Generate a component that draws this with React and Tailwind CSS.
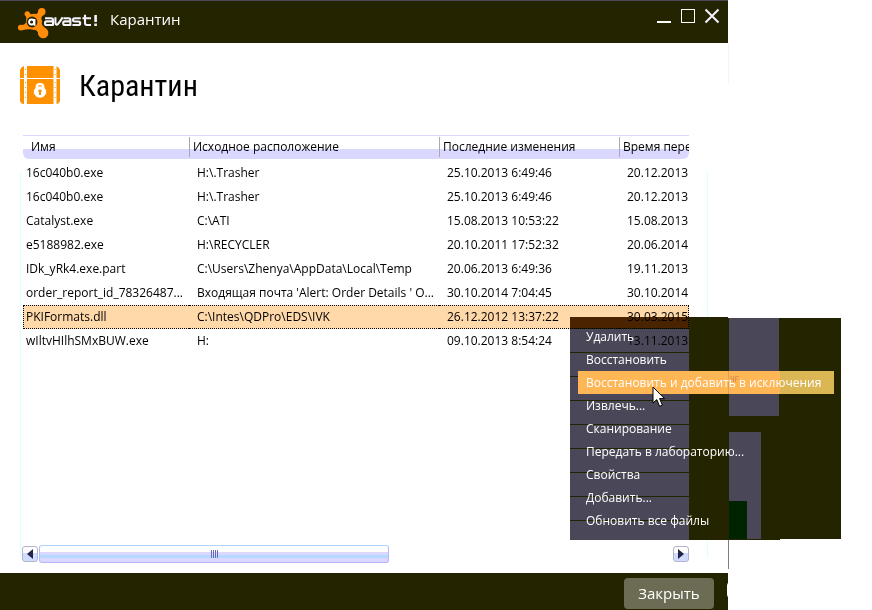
const FILES = [
  ["16c040b0.exe", "H:\\.Trasher", "25.10.2013 6:49:46", "20.12.2013"],
  ["16c040b0.exe", "H:\\.Trasher", "25.10.2013 6:49:46", "20.12.2013"],
  ["Catalyst.exe", "C:\\ATI", "15.08.2013 10:53:22", "15.08.2013"],
  ["e5188982.exe", "H:\\RECYCLER", "20.10.2011 17:52:32", "20.06.2014"],
  ["IDk_yRk4.exe.part", "C:\\Users\\Zhenya\\AppData\\Local\\Temp", "20.06.2013 6:49:36", "19.11.2013"],
  ["order_report_id_78326487...", "Входящая почта 'Alert: Order Details ' O...", "30.10.2014 7:04:45", "30.10.2014"],
  ["PKIFormats.dll", "C:\\Intes\\QDPro\\EDS\\IVK", "26.12.2012 13:37:22", "30.03.2015"],
  ["wIltvHIlhSMxBUW.exe", "H:", "09.10.2013 8:54:24", "13.11.2013"],
];
const SELECTED = 6;

const ACTIONS = [
  "Удалить",
  "Восстановить",
  "Восстановить и добавить в исключения",
  "Извлечь...",
  "Сканирование",
  "Передать в лабораторию...",
  "Свойства",
  "Добавить...",
  "Обновить все файлы",
];
const HOVERED = 2;

function AvastLogo() {
  return (
    <svg className="h-8 w-20 shrink-0" viewBox="0 0 80 32" role="img" aria-label="avast!">
      <g fill="#ff8c0a">
        <circle cx="16" cy="14.8" r="8" />
        <circle cx="23.8" cy="4.8" r="3.7" />
        <circle cx="9.2" cy="6.8" r="2.6" />
        <circle cx="2.8" cy="20.6" r="2.9" />
        <circle cx="25.2" cy="26" r="5.2" />
        <path d="M11.5 5.8Q12.5 8.2 15.5 7.8Q20 7.5 20.4 3.8L27 6.8Q23 9 23 13Q23 19 28.6 22L20.3 28Q20.5 22.5 14 22.3Q8 22 4.2 23.2L2 17.8Q7.5 18.5 8.4 14Q9 11 7.4 8.6Z" />
      </g>
      <circle cx="14" cy="15" r="5.4" fill="#242400" />
      <circle cx="13.6" cy="15" r="2.5" fill="none" stroke="#fff" strokeWidth="1.9" />
      <path d="M16.6 12V18.8" stroke="#fff" strokeWidth="1.7" />
      <g fill="none" stroke="#f4f2ff" strokeWidth="2.1" strokeLinejoin="round">
        <path d="M27 11.2H33Q35 11.2 35 13V18H28.6Q27 18 27 16.2Q27 14.4 28.6 14.4H34.5" />
        <path d="M37.4 10.2V15.6Q37.6 18 39.4 17.6Q40.4 17 44.6 10.4" />
        <path d="M45.4 11.2H50.6Q52.4 11.2 52.4 13V18H46.8Q45.2 18 45.2 16.2Q45.2 14.4 46.8 14.4H52" />
        <path d="M62.8 11.2H56.6Q55 11.2 55 12.8Q55 14.5 56.6 14.5H60.4Q62.2 14.5 62.2 16.2Q62.2 18 60.4 18H54.4" />
        <path d="M67 7.8V16Q67 18 69 18H73M64.4 11.2H73" />
        <path d="M77.6 8V15M77.6 16.6V19.1" strokeWidth="2.6" />
      </g>
    </svg>
  );
}

function ChestIcon() {
  return (
    <svg className="h-[38px] w-10 shrink-0" viewBox="0 0 40 38" aria-hidden="true">
      <path d="M4 0H36Q39 1 40 4V12H0V4Q1 1 4 0ZM0 13H40V35Q39 38 37 38H3Q1 38 0 35Z" fill="#ff9000" />
      <path d="M4 0H7V38H4ZM33.5 0H36.5V38H33.5Z" fill="#fff" />
      <g fill="#ff9000">
        <path d="M5 3h1v1h-1zM5 8h1v1h-1zM5 16h1v1h-1zM5 21h1v1h-1zM5 26h1v1h-1zM5 31h1v1h-1z" />
        <path d="M34.5 3h1v1h-1zM34.5 8h1v1h-1zM34.5 16h1v1h-1zM34.5 21h1v1h-1zM34.5 26h1v1h-1zM34.5 31h1v1h-1z" />
      </g>
      <ellipse cx="20" cy="26" rx="6.2" ry="5.8" fill="#fff" />
      <path d="M16.8 24V20.6Q16.8 18.1 20 18.1Q23.2 18.1 23.2 20.6V24" fill="none" stroke="#fff" strokeWidth="2.3" />
      <path d="M20 23.4A1.7 1.7 0 0 1 21 26.5V29H19V26.5A1.7 1.7 0 0 1 20 23.4Z" fill="#ff9000" />
    </svg>
  );
}

function TitleBar() {
  return (
    <header className="flex h-[43px] items-start border-t border-[#4a4858] bg-[#242400] pl-[18px] pr-2 text-white">
      <div className="flex flex-1 items-start gap-3 pt-[6px]">
        <AvastLogo />
        <span className="text-[15px] leading-6">Карантин</span>
      </div>
      <div className="flex items-center gap-2 pt-[7px]">
        <button type="button" aria-label="Свернуть" className="flex h-4 w-4 items-end justify-center pb-px">
          <span className="h-0.5 w-[14px] bg-white" />
        </button>
        <button type="button" aria-label="Развернуть" className="flex h-4 w-4 items-center justify-center">
          <span className="h-[14px] w-[14px] border border-white" />
        </button>
        <button type="button" aria-label="Закрыть окно" className="h-4 w-4">
          <svg viewBox="0 0 16 16" className="h-4 w-4">
            <path d="M1.5 1.5L14.5 14.5M14.5 1.5L1.5 14.5" stroke="#f4f2ff" strokeWidth="2" />
          </svg>
        </button>
      </div>
    </header>
  );
}

function FileTable() {
  return (
    <table className="w-full table-fixed border-separate border-spacing-0 text-left text-xs text-black">
      <colgroup>
        <col className="w-[166px]" />
        <col className="w-[250px]" />
        <col className="w-[180px]" />
        <col />
      </colgroup>
      <thead>
        <tr className="h-6 [&>th]:overflow-hidden [&>th]:whitespace-nowrap [&>th]:border-t [&>th]:border-[#dad8ff] [&>th]:bg-linear-to-b [&>th]:from-white [&>th]:from-58% [&>th]:to-[#dad8ff] [&>th]:to-58% [&>th]:p-0 [&>th]:pb-0.5 [&>th]:font-normal">
          <th scope="col" className="rounded-bl-md">
            <span className="block pl-2 leading-5">Имя</span>
          </th>
          <th scope="col">
            <span className="block border-l border-[#a9a9b0] pl-[3px] leading-5">Исходное расположение</span>
          </th>
          <th scope="col">
            <span className="block border-l border-[#a9a9b0] pl-[3px] leading-5">Последние изменения</span>
          </th>
          <th scope="col" className="rounded-br-md">
            <span className="block border-l border-[#a9a9b0] pl-[3px] leading-5">Время переноса</span>
          </th>
        </tr>
      </thead>
      <tbody className="before:block before:h-0.5">
        {FILES.map((file, i) => (
          <tr
            key={i}
            aria-selected={i === SELECTED}
            className={
              i === SELECTED
                ? "h-6 bg-[#ffd9aa] [&>td]:border-y [&>td]:border-dotted [&>td]:border-black [&>td:first-child]:border-l [&>td:first-child]:pl-0.5 [&>td:last-child]:border-r"
                : "h-6"
            }
          >
            {file.map((text, c) => (
              <td key={c} className={c === 0 ? "overflow-hidden whitespace-nowrap p-0 pl-[3px]" : "overflow-hidden whitespace-nowrap p-0 pl-2"}>
                {text}
              </td>
            ))}
          </tr>
        ))}
      </tbody>
    </table>
  );
}

function ScrollButton({ label, path }) {
  return (
    <button
      type="button"
      aria-label={label}
      className="flex h-4 w-4 items-center justify-center rounded-[3px] border border-[#b4b4c8] bg-linear-to-b from-white from-45% to-[#cfdcff] to-45%"
    >
      <svg viewBox="0 0 10 10" className="h-[10px] w-[10px]">
        <path d={path} fill="#242448" />
      </svg>
    </button>
  );
}

function HorizontalScroll() {
  return (
    <div className="flex h-[18px] items-center" role="scrollbar" aria-orientation="horizontal" aria-valuenow={0} aria-controls="files">
      <ScrollButton label="Влево" path="M8 0V10L2 5Z" />
      <div className="flex-1 px-px">
        <div className="flex h-[18px] w-[350px] flex-col justify-center rounded-[3px] border border-[#b6b6ff] border-t-[#b0d4ff] bg-[linear-gradient(to_bottom,#fff_38%,#dad8ff_38%,#dad8ff_56%,#b4daff_56%,#b4daff_74%,#dad8ff_74%)]">
          <div className="flex justify-center gap-px">
            <span className="h-2 w-px bg-[#6c6cb4]" />
            <span className="h-2 w-px bg-[#6c6cb4]" />
            <span className="h-2 w-px bg-[#6c6cb4]" />
            <span className="h-2 w-px bg-[#6c6cb4]" />
          </div>
        </div>
      </div>
      <ScrollButton label="Вправо" path="M2 0V10L8 5Z" />
    </div>
  );
}

function ContextMenu() {
  return (
    <div className="absolute left-[570px] top-[317px] h-[223px] w-[271px]">
      {/* translucent backdrop: the rows show through it */}
      <div className="absolute left-0 top-0 h-[11px] w-[119px] bg-[#4a2a00] mix-blend-multiply" />
      <div className="absolute bottom-0 left-0 top-[11px] w-[119px] bg-[repeating-linear-gradient(to_bottom,#242400_0px,#242400_1px,#4a4858_1px,#4a4858_24px)] mix-blend-multiply" />
      <div className="absolute inset-y-0 left-[119px] w-[39px] bg-[#242400]" />
      <div className="absolute bottom-px left-[158px] right-0 top-px bg-[#242400]" />
      <div className="absolute bottom-0 left-[158px] h-px w-[52px] bg-[#242400]" />
      <div className="absolute left-[159px] top-px h-[98px] w-[50px] bg-[#4a4858]" />
      <div className="absolute bottom-px left-[159px] h-[107px] w-8 bg-[#4a4858]" />
      <div className="absolute bottom-px left-[159px] h-[38px] w-[18px] bg-[#002400]" />
      <ul role="menu" className="relative py-2 pl-2 pr-[7px] text-xs text-white">
        {ACTIONS.map((label, i) => (
          <li key={label} role="none">
            <button
              type="button"
              role="menuitem"
              className={
                i === HOVERED
                  ? "relative block h-[23px] w-full whitespace-nowrap bg-linear-to-r from-[#ffb655] from-79% to-[#dab655] to-79% px-2 text-left"
                  : "block h-[23px] w-full whitespace-nowrap px-2 text-left"
              }
            >
              {i === HOVERED && (
                <svg className="absolute left-[150px] top-0 h-[23px] w-3" viewBox="0 0 12 23" fill="none" stroke="#da9155" aria-hidden="true">
                  <path d="M.5 0V23" opacity=".7" />
                  <path d="M3 5V8H5.5M5.5 5V11M11 5.5H7.5V11M7.5 8H10.5" />
                </svg>
              )}
              <span className="relative">{label}</span>
            </button>
          </li>
        ))}
      </ul>
      <svg className="absolute left-[82px] top-[69px] h-[22px] w-[14px]" viewBox="0 0 14 22" aria-hidden="true">
        <path d="M1 1V17L4.8 13.6L7.6 20.3L10.4 19.2L7.6 12.6H12.5Z" fill="#fff" stroke="#000" strokeWidth="1" />
      </svg>
    </div>
  );
}

export default function App() {
  return (
    <div className="relative min-h-screen bg-white font-['Open_Sans','Noto_Sans',sans-serif]">
      <div className="mr-36 flex min-h-screen flex-col">
        <TitleBar />
        <main className="relative flex flex-1 flex-col px-5 pb-[10px]">
          <div className="absolute left-full top-0 h-[41px] w-px bg-[#f4f4f6]" />
          <div className="absolute bottom-1 left-full h-[30px] w-px bg-[#7f7d8b]" />
          <div className="flex h-[91px] items-center gap-[19px] pb-[7px]">
            <ChestIcon />
            <h1 className="pt-0.5 font-['Roboto_Condensed','Roboto',sans-serif] text-[30px] leading-8 text-black">Карантин</h1>
          </div>
          <div className="relative flex flex-1 flex-col justify-between pl-0.5 pr-[19px] pt-px before:absolute before:bottom-1.5 before:left-0 before:right-0 before:top-[38px] before:border-x before:border-[#daffff]">
            <div id="files" className="pl-px">
              <FileTable />
            </div>
            <HorizontalScroll />
          </div>
        </main>
        <footer className="relative flex h-[37px] items-center justify-end overflow-hidden bg-[#242400] pr-[14px] pt-1">
          <button type="button" className="h-[31px] w-[90px] rounded-sm bg-[#6c6c55] text-[15px] text-white">
            Закрыть
          </button>
          <span className="absolute left-full top-[7px] -ml-px h-5 w-3 rounded-full bg-white" />
        </footer>
      </div>
      <ContextMenu />
    </div>
  );
}
